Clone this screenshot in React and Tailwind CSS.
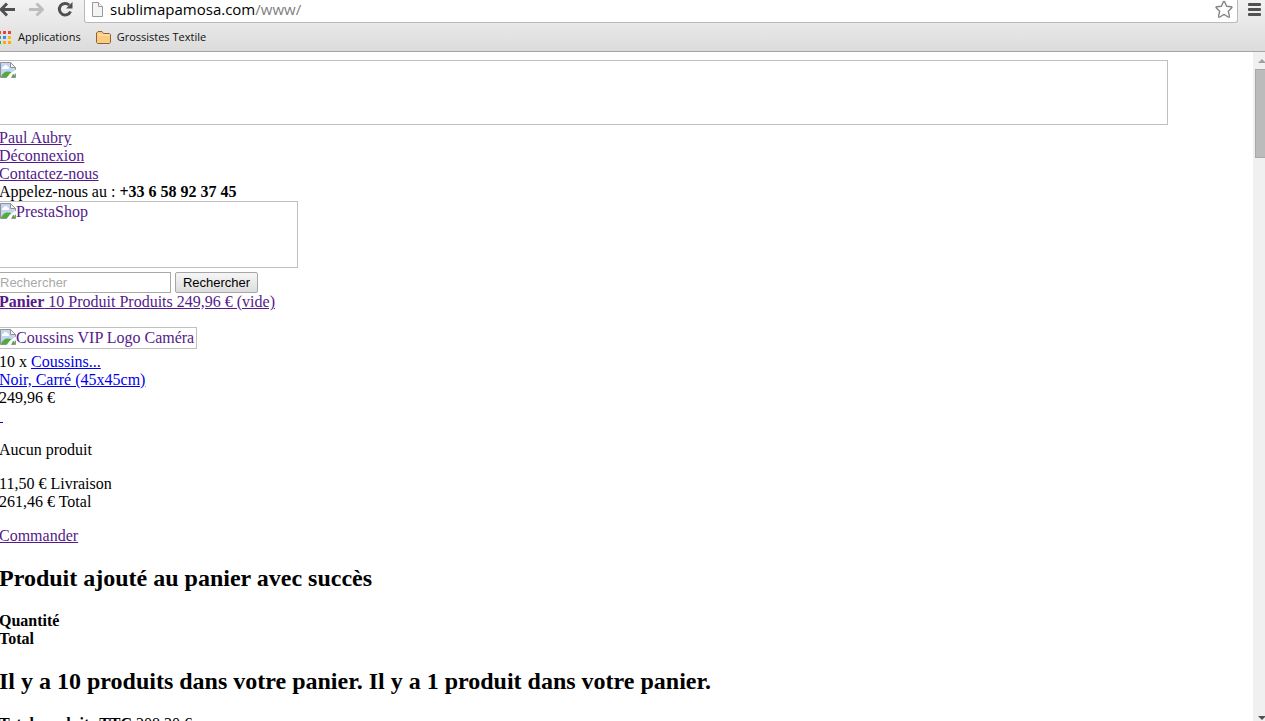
import React, { useState } from 'react';

const APP_COLORS = [
  '#ea4335', '#ea4335', '#ea4335',
  '#34a853', '#4285f4', '#fbbc05',
  '#34a853', '#fbab05', '#fbab05',
];

const BrokenIcon = () => (
  <svg width="16" height="16" viewBox="0 0 16 16" className="mt-px shrink-0" aria-hidden="true">
    <path d="M.5 .5H11L15.5 5V15.5H.5Z" fill="#c3d5f5" />
    <path d="M2 7C1.500 5 3.500 5 4 4C5 2.500 7 3 7.500 4.500C9.500 4.500 9.500 7 8 7Z" fill="#fff" />
    <path d="M1 15C2 11.500 5 9.500 8 9.500C11 9.500 13 11 15 14V15Z" fill="#55ab39" />
    <path d="M10.500 0V5.500H16V0Z" fill="#fff" />
    <path d="M10.500 .5V5.500H15.500Z" fill="#f4f4f4" stroke="#929292" />
    <path d="M10.500 .5H.5V15.500H15.500V5.500" fill="none" stroke="#929292" />
    <path d="M16 7.500V11.500L13 12L11 16H6.500L10 11.500Z" fill="#fff" />
  </svg>
);

const BrowserBar = () => {
  const [url, setUrl] = useState('/www/');

  return (
    <header className="shrink-0 border-b border-[#a4a4a4] bg-linear-to-b from-[#f2f2f2] to-[#dcdcdc] font-['Open_Sans',sans-serif]">
      <div className="flex h-[23px] items-start">
        <nav className="flex w-[84px] shrink-0 gap-3" aria-label="Navigation">
          <button aria-label="Précédent" className="h-5 w-4">
            <svg width="16" height="20" viewBox="0 0 16 20" fill="none" stroke="#505050" strokeWidth="3">
              <path d="M15 9.500H1M7 3.500L1 9.500L7 15.500" />
            </svg>
          </button>
          <button aria-label="Suivant" className="h-5 w-4">
            <svg width="16" height="20" viewBox="0 0 16 20" fill="none" stroke="#bdbdbd" strokeWidth="3">
              <path d="M1 9.500H14M8.500 3.500L14.500 9.500L8.500 15.500" />
            </svg>
          </button>
          <button aria-label="Actualiser" className="h-5 w-4">
            <svg width="18" height="20" viewBox="0 0 18 20">
              <path d="M13.200 5A5.800 5.800 0 1 0 14.500 11.500" fill="none" stroke="#505050" strokeWidth="3" />
              <path d="M16.500 2V8.500H10Z" fill="#505050" />
            </svg>
          </button>
        </nav>
        <div className="flex h-[23px] min-w-0 flex-1 items-start rounded-b-[3px] border border-t-0 border-[#b9b9b9] bg-white pr-1 pl-[7px]">
          <svg width="11" height="16" viewBox="0 0 11 16" className="mt-[2px] shrink-0" aria-hidden="true">
            <path d="M.5 .5H6.500L10.500 4.500V14.500H.5Z" fill="#f4f4f4" stroke="#999" />
            <path d="M6.500 .5V4.500H10.500" fill="#fff" stroke="#999" />
          </svg>
          <label htmlFor="address" className="ml-[7px] h-5 text-[15px] leading-[19px] text-black">sublimapamosa.com</label>
          <input
            id="address"
            value={url}
            onChange={(e) => setUrl(e.target.value)}
            className="h-[19px] min-w-0 flex-1 bg-transparent text-[15px] leading-[19px] text-[#808080] outline-none"
          />
          <button aria-label="Ajouter aux favoris" className="h-5 w-[18px]">
            <svg width="18" height="20" viewBox="0 0 18 20" fill="#fff" stroke="#858585" strokeWidth="1.400" strokeLinejoin="round">
              <path d="M9 1.500Q9.600 1.500 9.900 2.300L11.500 6.300L16.200 6.800Q17.500 7.100 16.600 8L13.300 11.200L14.400 16.200Q14.400 17.700 13.100 17L9 14.400L4.900 17Q3.600 17.700 3.600 16.200L4.700 11.200L1.400 8Q.5 7.100 1.800 6.800L6.500 6.300L8.100 2.300Q8.400 1.500 9 1.500Z" />
            </svg>
          </button>
        </div>
        <button aria-label="Menu" className="ml-[10px] h-5 w-[17px] shrink-0">
          <svg width="17" height="20" viewBox="0 0 17 20" fill="#505050">
            <rect y="3" width="13" height="3" rx="1" />
            <rect y="8" width="13" height="3" rx="1" />
            <rect y="13" width="13" height="3" rx="1" />
          </svg>
        </button>
      </div>
      <nav className="flex h-7 items-center text-[11px] text-[#111]" aria-label="Favoris">
        <a href="#apps" className="flex items-center gap-[7px]">
          <svg width="11" height="13" viewBox="2 0 11 13" aria-hidden="true">
            {APP_COLORS.map((color, i) => (
              <rect key={i} x={(i % 3) * 5} y={Math.floor(i / 3) * 5} width="3" height="3" fill={color} />
            ))}
          </svg>
          Applications
        </a>
        <a href="#grossistes" className="ml-[15px] flex items-center gap-[6px]">
          <svg width="15" height="13" viewBox="0 0 15 13" aria-hidden="true">
            <path d="M.5 11.500V2L2 .5H6L7.500 2.500H13.500L14.500 3.500V11.500L13.500 12.500H1.500Z" fill="#fbcb80" stroke="#8a6238" />
            <path d="M1.500 4H13.500" stroke="#ffe7b8" />
          </svg>
          Grossistes Textile
        </a>
      </nav>
    </header>
  );
};

const Scrollbar = () => (
  <div className="flex w-3 shrink-0 flex-col bg-[#f0f0f0]" aria-hidden="true">
    <svg width="12" height="17" viewBox="0 0 12 17" className="shrink-0">
      <path d="M5 11L9 7L13 11Z" fill="#a0a0a0" />
    </svg>
    <div className="ml-[2px] h-[89px] border border-r-0 border-[#a8a8a8] bg-[#bbb]" />
    <svg width="12" height="17" viewBox="0 0 12 17" className="mt-auto shrink-0">
      <path d="M5 12L13 12L9 16Z" fill="#505050" />
    </svg>
  </div>
);

const App = () => {
  const [query, setQuery] = useState('');
  const visited = 'text-[#551a8b] underline';
  const fresh = 'text-[#0000ee] underline';

  return (
    <div className="flex h-screen flex-col overflow-hidden bg-white">
      <BrowserBar />
      <div className="flex min-h-0 flex-1">
        <main className="-ml-px min-w-0 flex-1 overflow-hidden pt-2 font-['Liberation_Serif',serif] text-base leading-[18px] text-black">
          <a href="#banner" aria-label="Accueil" className="mb-1 flex h-[65px] w-full max-w-[1169px] border border-[#c0c0c0]">
            <BrokenIcon />
          </a>
          <ul>
            <li><a href="#compte" className={visited}>Paul Aubry</a></li>
            <li><a href="#logout" className={visited}>Déconnexion</a></li>
            <li><a href="#contact" className={visited}>Contactez-nous</a></li>
          </ul>
          <p>Appelez-nous au : <strong>+33 6 58 92 37 45</strong></p>

          <a href="#accueil" className="flex h-[67px] w-[299px] border border-[#c0c0c0] text-[#551a8b]">
            <BrokenIcon />
            <span className="mt-px">PrestaShop</span>
          </a>

          <form className="mt-1 flex gap-1 font-['Liberation_Sans',sans-serif] text-[13px]" onSubmit={(e) => e.preventDefault()}>
            <input
              type="text"
              aria-label="Rechercher"
              placeholder="Rechercher"
              value={query}
              onChange={(e) => setQuery(e.target.value)}
              className="h-[21px] w-[172px] border border-[#a9a9a9] bg-white placeholder:text-[#a9a9a9]"
            />
            <button className="h-[21px] w-[83px] rounded-xs border border-[#a6a6a6] bg-linear-to-b from-[#f6f6f6] to-[#dddddd] leading-[18px]">
              Rechercher
            </button>
          </form>

          <a href="#panier" className={visited}><b>Panier</b> 10 Produit Produits 249,96 € (vide)</a>

          <a href="#coussins" className="mt-4 flex h-[22px] w-fit border border-[#c0c0c0] pr-0.5 text-[#551a8b]">
            <BrokenIcon />
            <span className="mt-px">Coussins VIP Logo Caméra</span>
          </a>
          <div className="mt-1">
            <p>10 x <a href="#produit" className={fresh}>Coussins...</a></p>
            <p><a href="#variante" className={fresh}>Noir, Carré (45x45cm)</a></p>
            <p>249,96 €</p>
            <p><a href="#retirer" aria-label="Retirer" className={fresh}>&nbsp;</a></p>
          </div>

          <p className="mt-4">Aucun produit</p>
          <div className="mt-4">
            <p>11,50 € Livraison</p>
            <p>261,46 € Total</p>
          </div>
          <p className="mt-4"><a href="#commander" className={visited}>Commander</a></p>

          <h2 className="my-5 text-2xl leading-[27px] font-bold">Produit ajouté au panier avec succès</h2>
          <p><strong>Quantité</strong></p>
          <p><strong>Total</strong></p>
          <h2 className="my-5 text-2xl leading-[27px] font-bold">
            Il y a 10 produits dans votre panier. Il y a 1 produit dans votre panier.
          </h2>
          <p><strong>Total produits TTC</strong> 208,30 €</p>
        </main>
        <Scrollbar />
      </div>
    </div>
  );
};

export default App;
